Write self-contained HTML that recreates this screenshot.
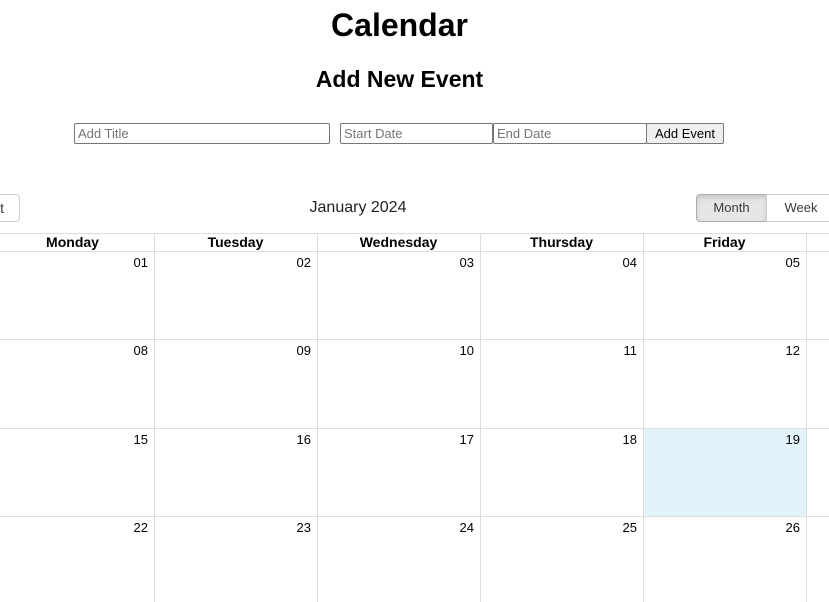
<!DOCTYPE html><html><head><style>
body{margin:0;width:829px;height:602px;overflow:hidden;background:#fff;font-family:"Liberation Sans",sans-serif;position:relative}
.a{position:absolute}
h1{position:absolute;left:0;width:799px;text-align:center;top:7px;margin:0;font-size:32px;font-weight:bold}
h2{position:absolute;left:0;width:799px;text-align:center;top:66px;margin:0;font-size:23px;font-weight:bold}
.in{position:absolute;top:123px;border:1px solid #767676;border-radius:2px;font-size:13px;color:#757575;padding-left:3px;line-height:19px;box-sizing:border-box;height:21px}
.v{position:absolute;width:1px;background:#ddd}
.h{position:absolute;height:1px;background:#ddd;left:0;width:829px}
.hd{position:absolute;top:234px;width:163px;text-align:center;font-weight:bold;font-size:14px;line-height:17px}
.n{position:absolute;font-size:13px;text-align:right;width:60px}
</style></head><body>
<h1>Calendar</h1><h2>Add New Event</h2>
<div class="in" style="left:74px;width:256px">Add Title</div>
<div class="in" style="left:340px;width:153px">Start Date</div>
<div class="in" style="left:493px;width:154px">End Date</div>
<div class="a" style="left:646px;top:123px;width:78px;height:21px;box-sizing:border-box;border:1px solid #767676;border-radius:2px;background:#efefef;font-size:13px;text-align:center;line-height:19px">Add Event</div>
<div class="a" style="left:-20px;top:194px;width:40px;height:28px;box-sizing:border-box;border:1px solid #ccc;border-radius:4px;font-size:14px;line-height:26px;text-align:right;padding-right:15px;color:#373a3c">t</div>
<div class="a" style="left:258px;top:199px;width:200px;text-align:center;font-size:16px;color:#222">January 2024</div>
<div class="a" style="left:696px;top:194px;width:71px;height:28px;box-sizing:border-box;border:1px solid #adadad;border-radius:4px 0 0 4px;background:#e6e6e6;box-shadow:inset 0 3px 5px rgba(0,0,0,.125);font-size:13px;line-height:26px;text-align:center;color:#373a3c">Month</div>
<div class="a" style="left:766px;top:194px;width:70px;height:28px;box-sizing:border-box;border:1px solid #ccc;font-size:13px;line-height:26px;text-align:center;color:#373a3c">Week</div>
<div class="a" style="left:644px;top:429px;width:162px;height:87px;background:#e3f3fc"></div>
<div class="h" style="top:233px"></div><div class="h" style="top:251px"></div><div class="h" style="top:339px"></div><div class="h" style="top:428px"></div><div class="h" style="top:516px"></div>
<div class="v" style="left:154px;top:233px;height:369px"></div>
<div class="v" style="left:317px;top:233px;height:369px"></div>
<div class="v" style="left:480px;top:233px;height:369px"></div>
<div class="v" style="left:643px;top:233px;height:369px"></div>
<div class="v" style="left:806px;top:233px;height:369px"></div>
<div class="hd" style="left:-9px">Monday</div><div class="hd" style="left:154px">Tuesday</div><div class="hd" style="left:317px">Wednesday</div><div class="hd" style="left:480px">Thursday</div><div class="hd" style="left:643px">Friday</div>
<div class="n" style="left:88px;top:255px">01</div><div class="n" style="left:251px;top:255px">02</div><div class="n" style="left:414px;top:255px">03</div><div class="n" style="left:577px;top:255px">04</div><div class="n" style="left:740px;top:255px">05</div>
<div class="n" style="left:88px;top:343px">08</div><div class="n" style="left:251px;top:343px">09</div><div class="n" style="left:414px;top:343px">10</div><div class="n" style="left:577px;top:343px">11</div><div class="n" style="left:740px;top:343px">12</div>
<div class="n" style="left:88px;top:432px">15</div><div class="n" style="left:251px;top:432px">16</div><div class="n" style="left:414px;top:432px">17</div><div class="n" style="left:577px;top:432px">18</div><div class="n" style="left:740px;top:432px">19</div>
<div class="n" style="left:88px;top:520px">22</div><div class="n" style="left:251px;top:520px">23</div><div class="n" style="left:414px;top:520px">24</div><div class="n" style="left:577px;top:520px">25</div><div class="n" style="left:740px;top:520px">26</div>
</body></html>
